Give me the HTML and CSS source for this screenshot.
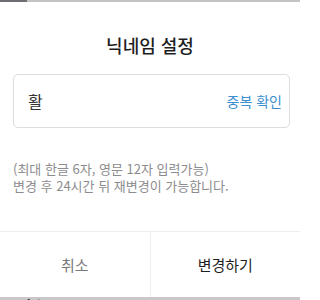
FILE: index.html
```html
<!DOCTYPE html>
<html lang="ko">
<head>
<meta charset="utf-8">
<link rel="stylesheet" href="styles.css">
</head>
<body>
<div class="top-strip"><span class="top-dark"></span></div>
<div class="modal">
  <h1 class="title">닉네임 설정</h1>
  <div class="field">
    <span class="value">활</span>
    <span class="check">중복 확인</span>
  </div>
  <p class="help">(최대 한글 6자, 영문 12자 입력가능)<br>변경 후 24시간 뒤 재변경이 가능합니다.</p>
  <div class="actions">
    <button class="btn cancel">취소</button>
    <button class="btn confirm">변경하기</button>
  </div>
</div>
<div class="bottom-strip"><span class="under-text">금번수</span></div>
</body>
</html>
```
FILE: styles.css
```css
* { box-sizing: border-box; }
html {
  margin: 0;
  padding: 0;
  background: #fff;
  overflow: hidden;
}
body {
  margin: 0;
  padding: 0;
  width: 300px;
  height: 300px;
  overflow: hidden;
  background: #c8c8ca;
  font-family: "Noto Sans CJK KR", "Noto Sans", sans-serif;
}
.top-strip {
  height: 2px;
  background: #c4c4c6;
  display: flex;
}
.top-dark {
  width: 27px;
  height: 2px;
  background: #6e6e72;
}
.modal {
  height: 295px;
  background: #fff;
  display: flex;
  flex-direction: column;
  padding-top: 31px;
}
.title {
  margin: 0;
  font-size: 18px;
  font-weight: 500;
  line-height: 24px;
  text-align: center;
  color: #1e1e1e;
}
.field {
  margin: 17px 10px 0 13px;
  height: 54px;
  border: 1px solid #dcdce2;
  border-radius: 5px;
  display: flex;
  align-items: center;
  justify-content: space-between;
  padding: 0 7px 0 14px;
}
.value {
  font-size: 16px;
  color: #333;
}
.check {
  font-size: 14px;
  color: #3b8fd0;
}
.help {
  margin: 32px 0 0 13px;
  font-size: 13px;
  line-height: 17px;
  color: #8c8c8e;
}
.actions {
  margin-top: auto;
  height: 66px;
  border-top: 1px solid #efeff3;
  display: flex;
}
.btn {
  flex: 1;
  border: 0;
  background: #fff;
  font-family: inherit;
  font-size: 15px;
  padding: 0;
}
.cancel {
  color: #78787a;
  border-right: 1px solid #efeff3;
}
.confirm {
  color: #1e1e1e;
}
.bottom-strip {
  height: 3px;
  overflow: hidden;
  background: #c8c8ca;
  padding-left: 2px;
}
.under-text {
  display: block;
  font-size: 16px;
  font-weight: 700;
  line-height: 16px;
  margin-top: 1px;
  color: #111;
}
```
